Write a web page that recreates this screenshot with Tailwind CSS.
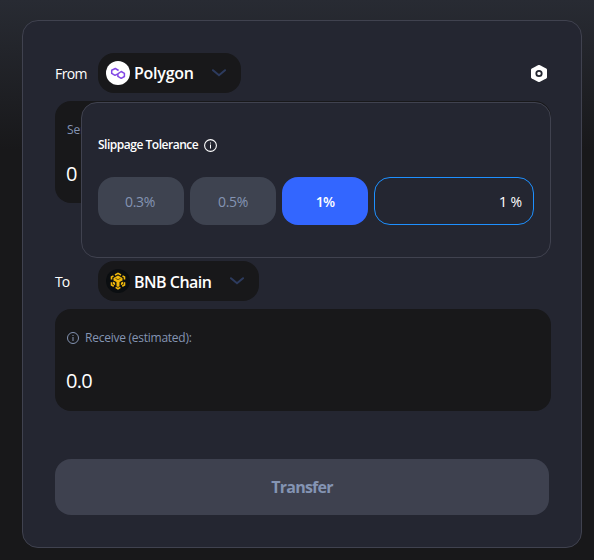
<!DOCTYPE html>
<html lang="en">
<head>
<meta charset="utf-8">
<title>Transfer</title>
<script src="https://cdn.jsdelivr.net/npm/@tailwindcss/browser@4"></script>
</head>
<body class="h-[560px] w-[594px] overflow-hidden bg-[#18181a] bg-[linear-gradient(#282b33_0px,#18181a_150px)] bg-no-repeat pl-[22px] pt-5 font-['Open_Sans','Noto_Sans',sans-serif] text-white">
<main class="relative h-[528px] w-[560px] rounded-2xl border border-[#40424f] bg-[#242631] pl-8 pr-[30px] pt-8">
  <header class="flex h-10 items-center">
    <span class="w-[43px] pt-0.5 text-sm tracking-[-0.6px]">From</span>
    <button class="flex h-10 w-[143px] items-center rounded-2xl bg-[#18181a] pl-2">
      <svg class="size-6" viewBox="0 0 24 24" fill="none"><circle cx="12" cy="12" r="12" fill="#fff"/><path d="M12.600 9.500 9.300 7.500 5.700 9.200v3.200l3.300 1.900 2.800-1.500 3.400-2.300 3.200 1.800v3.200l-3.200 1.800-3.300-1.900v-2.100" stroke="#8247e5" stroke-width="1.500" stroke-linejoin="round"/></svg>
      <span class="ml-1 w-[77px] text-left text-base font-semibold tracking-[-0.25px]">Polygon</span>
      <svg class="h-2 w-4" viewBox="0 0 16 8" fill="none" stroke="#2d3b5e" stroke-width="2" stroke-linecap="round"><path d="m2 1.200 6 5L14 1.200"/></svg>
    </button>
    <svg class="ml-auto mr-1 h-[17px] w-4" viewBox="0 0 16 17"><path d="M7 .2Q8-.3 9 .2l6.200 3.200q.8.500.8 1.400v7.400q0 .9-.8 1.400L9 16.800q-1 .5-2 0L.8 13.600Q0 13.100 0 12.200V4.800q0-.9.800-1.400Z" fill="#fff"/><circle cx="8" cy="8.500" r="2.700" fill="#fff" stroke="#242631" stroke-width="1.800"/></svg>
  </header>
  <section class="mt-2 h-[102px] rounded-2xl bg-[#18181a] px-3 pt-5">
    <p class="text-xs leading-[18px] text-[#8494b3]">Send:</p>
    <p class="-ml-px mt-5 text-xl leading-[30px]">0</p>
  </section>
  <div class="mt-[58px] flex h-10 items-center">
    <span class="w-[43px] pt-0.5 text-sm tracking-[-0.9px]">To</span>
    <button class="flex h-10 w-[161px] items-center rounded-2xl bg-[#18181a] pl-2">
      <svg class="size-6" viewBox="0 0 24 24"><circle cx="12" cy="12" r="12" fill="#0b0e11"/><g fill="none" stroke="#f0b90b" stroke-width="1.600"><path d="m9 6 3-1.700L15 6M5.500 10.500V8l2-1.100M16.500 6.900l2 1.100v2.500M5.500 13.300V16l2.300 1.300M18.500 13.300V16l-2.300 1.300M9.600 18.400l2.400 1.400 2.400-1.400"/></g><path d="m12 6.500 4.500 2.600v2.300L13.500 13v4.200l-1.500.9-1.500-.9V13l-3-1.600V9.100ZM6.900 12.500l2.200 1.300v2.400l-2.200-1.300Zm10.200 0-2.200 1.300v2.400l2.200-1.300Z" fill="#f0b90b"/><path d="m9.400 9.200 2.600 1.500 2.600-1.500" fill="none" stroke="#0b0e11" stroke-width=".6"/></svg>
      <span class="ml-1 w-[95px] pt-px text-left text-base font-semibold tracking-[-0.5px]">BNB Chain</span>
      <svg class="h-2 w-4" viewBox="0 0 16 8" fill="none" stroke="#2d3b5e" stroke-width="2" stroke-linecap="round"><path d="m2 1.200 6 5L14 1.200"/></svg>
    </button>
  </div>
  <section class="mt-2 h-[102px] rounded-2xl bg-[#18181a] px-3 pt-5">
    <div class="flex h-[18px] items-center text-xs text-[#8494b3]">
      <svg class="size-3" viewBox="0 0 12 12" fill="none" stroke="currentColor"><circle cx="6" cy="6" r="5.500"/><path d="M6 5v4M6 3v1"/></svg>
      <span class="ml-1.5 tracking-[-0.25px]">Receive (estimated):</span>
    </div>
    <p class="-ml-px mt-[19px] text-xl leading-[30px] tracking-[-0.7px]">0.0</p>
  </section>
  <button class="mt-12 h-14 w-[494px] rounded-2xl bg-[#3e414f] text-base font-bold tracking-[-0.75px] text-[#8494b3]">Transfer</button>

  <div class="absolute left-[58px] top-[81px] h-[156px] w-[470px] rounded-2xl border border-[#40424f] bg-[#242631] pl-4 pt-[33px]">
    <div class="flex h-[18px] items-center text-xs font-semibold">
      <span class="w-[100px] whitespace-nowrap tracking-[-0.48px]">Slippage Tolerance</span>
      <svg class="ml-1.5 size-[13px]" viewBox="0 0 13 13" fill="none" stroke="currentColor"><circle cx="6.500" cy="6.500" r="5.900" stroke-width="1.100"/><path d="M6.500 5.500v4M6.500 3.500v1"/></svg>
    </div>
    <div class="mt-[23px] flex gap-1.5 text-sm">
      <button class="h-12 w-[86px] rounded-2xl bg-[#3e4350] pr-0.5 pt-0.5 tracking-[-0.3px] text-[#8494b3]">0.3%</button>
      <button class="h-12 w-[86px] rounded-2xl bg-[#3e4350] pt-0.5 tracking-[-0.3px] text-[#8494b3]">0.5%</button>
      <button class="h-12 w-[86px] rounded-2xl bg-[#3366ff] pt-0.5 font-semibold tracking-[-0.8px]">1%</button>
      <div class="flex h-12 w-40 items-center justify-end gap-[3px] rounded-2xl border border-[#1e90ff] pr-[11px] pt-0.5">
        <span class="text-[15px]">1</span><span class="text-sm">%</span>
      </div>
    </div>
  </div>
</main>
</body>
</html>
